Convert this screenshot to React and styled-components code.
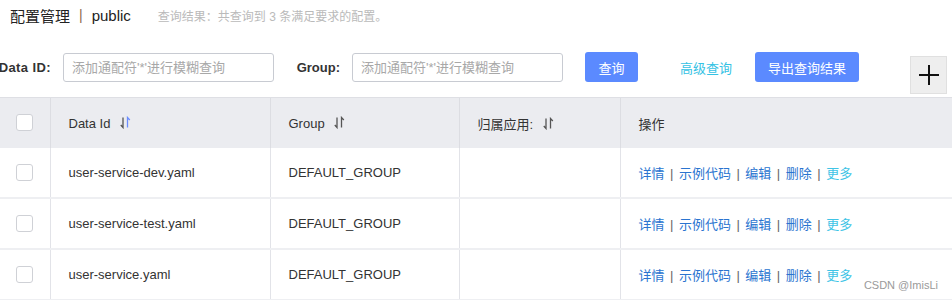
import styled, { createGlobalStyle } from "styled-components";

const GlobalStyle = createGlobalStyle`
  body {
    margin: 0;
    background: #fff;
    font-family: "Liberation Sans", "Noto Sans CJK SC", sans-serif;
    color: #333;
  }
`;

const rows = [
  "user-service-dev.yaml",
  "user-service-test.yaml",
  "user-service.yaml",
];

const actions = ["详情", "示例代码", "编辑", "删除"];

const SortIcon = ({ active }) => (
  <SortSvg width="11" height="13" viewBox="0 0 11 13">
    <path d="M3 1.5 V11.5 L0.8 9" stroke="#555" strokeWidth="1.3" fill="none" />
    <path
      d="M7.5 11.5 V1.5 L9.8 4"
      stroke={active ? "#6b8dff" : "#555"}
      strokeWidth="1.3"
      fill="none"
    />
  </SortSvg>
);

const App = () => {
  return (
    <Page>
      <GlobalStyle />
      <TitleBar>
        <Title>配置管理</Title>
        <Divider>|</Divider>
        <Title>public</Title>
        <Summary>查询结果：共查询到 3 条满足要求的配置。</Summary>
      </TitleBar>

      <Toolbar>
        <Label $width={51} $spacing={0.4}>Data ID:</Label>
        <SearchInput $left={12} placeholder="添加通配符'*'进行模糊查询" />
        <Label $width={66}>Group:</Label>
        <SearchInput $left={12} placeholder="添加通配符'*'进行模糊查询" />
        <PrimaryButton $left={22} $width={53}>查询</PrimaryButton>
        <TextLink>高级查询</TextLink>
        <PrimaryButton $left={23} $width={104}>导出查询结果</PrimaryButton>
        <AddButton>
          <svg width="22" height="22" viewBox="0 0 22 22">
            <path d="M11 1 V21 M1 11 H21" stroke="#111" strokeWidth="2" />
          </svg>
        </AddButton>
      </Toolbar>

      <Table>
        <colgroup>
          <col style={{ width: 50 }} />
          <col style={{ width: 220 }} />
          <col style={{ width: 189 }} />
          <col style={{ width: 161 }} />
          <col />
        </colgroup>
        <thead>
          <tr>
            <HeadCell $center>
              <Checkbox />
            </HeadCell>
            <HeadCell>
              Data Id <SortIcon active />
            </HeadCell>
            <HeadCell>
              Group <SortIcon />
            </HeadCell>
            <HeadCell>
              归属应用: <SortIcon />
            </HeadCell>
            <HeadCell>操作</HeadCell>
          </tr>
        </thead>
        <tbody>
          {rows.map((name) => (
            <tr key={name}>
              <Cell $center>
                <Checkbox />
              </Cell>
              <Cell>{name}</Cell>
              <Cell>DEFAULT_GROUP</Cell>
              <Cell />
              <Cell>
                {actions.map((a) => (
                  <span key={a}>
                    <ActionLink>{a}</ActionLink>
                    <Sep>|</Sep>
                  </span>
                ))}
                <ActionLink $more>更多</ActionLink>
              </Cell>
            </tr>
          ))}
        </tbody>
      </Table>

      <Watermark>CSDN @ImisLi</Watermark>
    </Page>
  );
};

//Styled Components
const Page = styled.div`
  position: relative;
  width: 952px;
  height: 300px;
  overflow: hidden;
`;

const TitleBar = styled.div`
  display: flex;
  align-items: center;
  height: 30px;
  padding-left: 10px;
`;

const Title = styled.span`
  font-size: 15px;
  color: #222;
`;

const Divider = styled.span`
  font-size: 14px;
  color: #8a6a4a;
  margin: 0 9px 0 9px;
`;

const Summary = styled.span`
  font-size: 12px;
  color: #bababa;
  margin-left: 27px;
`;

const Toolbar = styled.div`
  display: flex;
  align-items: flex-start;
  height: 42px;
  margin-top: 22px;
`;

const Label = styled.div`
  display: flex;
  justify-content: flex-end;
  align-items: center;
  width: ${(p) => p.$width}px;
  flex-shrink: 0;
  height: 30px;
  font-size: 13px;
  font-weight: bold;
  letter-spacing: ${(p) => p.$spacing || 0}px;
  color: #333;
  white-space: nowrap;
`;

const SearchInput = styled.input`
  box-sizing: border-box;
  width: 211px;
  height: 29px;
  margin-top: 1px;
  margin-left: ${(p) => p.$left}px;
  padding: 0 8px;
  border: 1px solid #c8cbd2;
  border-radius: 3px;
  font-family: inherit;
  font-size: 13px;
  outline: none;

  &::placeholder {
    color: #a8a8a8;
  }
`;

const PrimaryButton = styled.button`
  box-sizing: border-box;
  width: ${(p) => p.$width}px;
  height: 30px;
  margin-left: ${(p) => p.$left}px;
  border: none;
  border-radius: 3px;
  background: #5b8aff;
  color: #fff;
  font-family: inherit;
  font-size: 13px;
  cursor: pointer;
`;

const TextLink = styled.span`
  display: flex;
  align-items: center;
  height: 30px;
  margin-left: 42px;
  font-size: 13px;
  color: #35c2e4;
  cursor: pointer;
`;

const AddButton = styled.div`
  box-sizing: border-box;
  display: flex;
  align-items: center;
  justify-content: center;
  width: 37px;
  height: 38px;
  margin: 4px 5px 0 auto;
  background: #eeeeee;
  border: 1px solid #e0e0e0;
`;

const Table = styled.table`
  width: 100%;
  margin-top: 3px;
  border-collapse: collapse;
  table-layout: fixed;
  font-size: 13px;
`;

const HeadCell = styled.th`
  height: 50px;
  padding: 0 0 0 ${(p) => (p.$center ? 0 : 18)}px;
  text-align: ${(p) => (p.$center ? "center" : "left")};
  font-weight: normal;
  color: #333;
  background: #ebecf0;
  border-top: 1px solid #dedfe4;
  border-left: 1px solid #dcdde2;
  white-space: nowrap;

  &:first-child {
    border-left: none;
  }
`;

const Cell = styled.td`
  height: 49px;
  padding: 0 0 0 ${(p) => (p.$center ? 0 : 18)}px;
  text-align: ${(p) => (p.$center ? "center" : "left")};
  color: #333;
  border-left: 1px solid #e2e3e8;
  border-bottom: 2px solid #eeeff2;
  white-space: nowrap;

  &:first-child {
    border-left: none;
  }
`;

const Checkbox = styled.span`
  display: inline-block;
  box-sizing: border-box;
  width: 17px;
  height: 17px;
  margin-top: -2px;
  vertical-align: middle;
  background: #fff;
  border: 1px solid #cfd1d6;
  border-radius: 3px;
`;

const SortSvg = styled.svg`
  vertical-align: -1px;
  margin-left: 6px;
`;

const ActionLink = styled.span`
  color: ${(p) => (p.$more ? "#3fc4e6" : "#2a74d0")};
  cursor: pointer;
`;

const Sep = styled.span`
  color: #666;
  margin: 0 5.5px;
`;

const Watermark = styled.div`
  position: absolute;
  right: 14px;
  bottom: 9px;
  font-size: 11px;
  color: #9a9a9a;
  font-family: "Liberation Sans", sans-serif;
`;

export default App;
